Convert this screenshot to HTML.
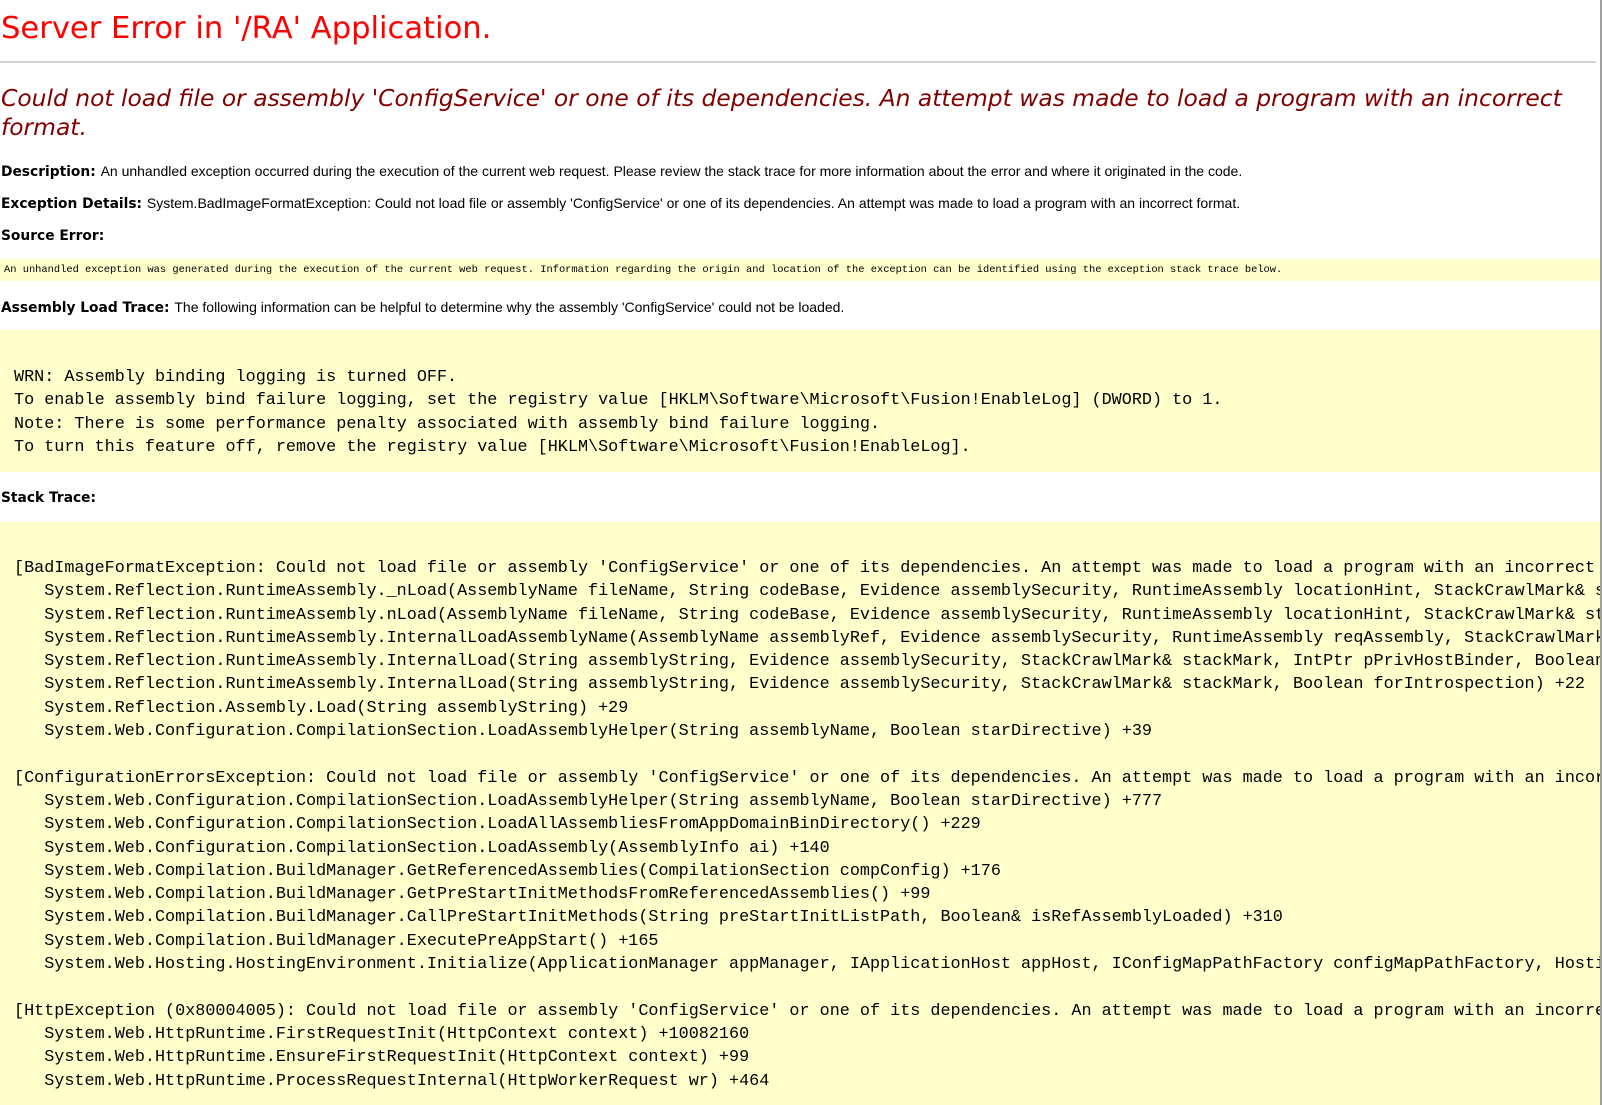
<!DOCTYPE html>
<html><head><meta charset="utf-8"><style>
html,body{margin:0;padding:0;width:1602px;height:1105px;overflow:hidden;background:#fff;position:relative}
#w{position:absolute;left:0;top:0;width:1600px;height:1105px;overflow:hidden}
.a{position:absolute;white-space:pre;line-height:1}
.t{left:1px;font-family:"DejaVu Sans","Liberation Sans",sans-serif;font-size:30.6px;color:#ff0000}
.h{left:1px;font-family:"DejaVu Sans","Liberation Sans",sans-serif;font-style:italic;font-size:23.4px;color:#800000}
.l{font-family:"DejaVu Sans","Liberation Sans",sans-serif;font-weight:bold;font-size:13.8px;color:#000;left:1px}
.l span{font-family:"Liberation Sans",Arial,sans-serif;font-weight:normal;font-size:14px}
.y{position:absolute;background:#ffffcc;left:0;width:1600px}
.m{font-family:"Liberation Mono","DejaVu Sans Mono",monospace;font-size:16.8px;color:#000}
.s{font-family:"Liberation Mono","DejaVu Sans Mono",monospace;font-size:10.4px;color:#000;left:4px}
</style></head><body><div id="w">
<div class="a t" style="top:14px">Server Error in '/RA' Application.</div>
<div style="position:absolute;left:0;top:61px;width:1596px;height:2px;background:#d4d4d4"></div>
<div class="a h" style="top:87px">Could not load file or assembly 'ConfigService' or one of its dependencies. An attempt was made to load a program with an incorrect</div>
<div class="a h" style="top:116px">format.</div>
<div class="a l" style="top:164px">Description: <span>An unhandled exception occurred during the execution of the current web request. Please review the stack trace for more information about the error and where it originated in the code.</span></div>
<div class="a l" style="top:196px">Exception Details: <span>System.BadImageFormatException: Could not load file or assembly 'ConfigService' or one of its dependencies. An attempt was made to load a program with an incorrect format.</span></div>
<div class="a l" style="top:230px">Source Error:</div>
<div class="y" style="top:259px;height:22px"></div>
<div class="a s" style="top:265px">An unhandled exception was generated during the execution of the current web request. Information regarding the origin and location of the exception can be identified using the exception stack trace below.</div>
<div class="a l" style="top:300px">Assembly Load Trace: <span>The following information can be helpful to determine why the assembly 'ConfigService' could not be loaded.</span></div>
<div class="y" style="top:330px;height:142px"></div>
<div class="y" style="top:522px;height:583px"></div>
<div class="a l" style="top:492px">Stack Trace:</div>
<div class="a m" style="left:14px;top:366px;line-height:23.4px">WRN: Assembly binding logging is turned OFF.
To enable assembly bind failure logging, set the registry value [HKLM\Software\Microsoft\Fusion!EnableLog] (DWORD) to 1.
Note: There is some performance penalty associated with assembly bind failure logging.
To turn this feature off, remove the registry value [HKLM\Software\Microsoft\Fusion!EnableLog].</div>
<div class="a m" style="left:14px;top:557px;line-height:23.3px">[BadImageFormatException: Could not load file or assembly 'ConfigService' or one of its dependencies. An attempt was made to load a program with an incorrect format.]
   System.Reflection.RuntimeAssembly._nLoad(AssemblyName fileName, String codeBase, Evidence assemblySecurity, RuntimeAssembly locationHint, StackCrawlMark&amp; stackMark)
   System.Reflection.RuntimeAssembly.nLoad(AssemblyName fileName, String codeBase, Evidence assemblySecurity, RuntimeAssembly locationHint, StackCrawlMark&amp; stackMark)
   System.Reflection.RuntimeAssembly.InternalLoadAssemblyName(AssemblyName assemblyRef, Evidence assemblySecurity, RuntimeAssembly reqAssembly, StackCrawlMark&amp; stackMark)
   System.Reflection.RuntimeAssembly.InternalLoad(String assemblyString, Evidence assemblySecurity, StackCrawlMark&amp; stackMark, IntPtr pPrivHostBinder, Boolean forIntrospection)
   System.Reflection.RuntimeAssembly.InternalLoad(String assemblyString, Evidence assemblySecurity, StackCrawlMark&amp; stackMark, Boolean forIntrospection) +22
   System.Reflection.Assembly.Load(String assemblyString) +29
   System.Web.Configuration.CompilationSection.LoadAssemblyHelper(String assemblyName, Boolean starDirective) +39

[ConfigurationErrorsException: Could not load file or assembly 'ConfigService' or one of its dependencies. An attempt was made to load a program with an incorrect format.]
   System.Web.Configuration.CompilationSection.LoadAssemblyHelper(String assemblyName, Boolean starDirective) +777
   System.Web.Configuration.CompilationSection.LoadAllAssembliesFromAppDomainBinDirectory() +229
   System.Web.Configuration.CompilationSection.LoadAssembly(AssemblyInfo ai) +140
   System.Web.Compilation.BuildManager.GetReferencedAssemblies(CompilationSection compConfig) +176
   System.Web.Compilation.BuildManager.GetPreStartInitMethodsFromReferencedAssemblies() +99
   System.Web.Compilation.BuildManager.CallPreStartInitMethods(String preStartInitListPath, Boolean&amp; isRefAssemblyLoaded) +310
   System.Web.Compilation.BuildManager.ExecutePreAppStart() +165
   System.Web.Hosting.HostingEnvironment.Initialize(ApplicationManager appManager, IApplicationHost appHost, IConfigMapPathFactory configMapPathFactory, HostingEnvironmentParameters hostingParameters)

[HttpException (0x80004005): Could not load file or assembly 'ConfigService' or one of its dependencies. An attempt was made to load a program with an incorrect format.]
   System.Web.HttpRuntime.FirstRequestInit(HttpContext context) +10082160
   System.Web.HttpRuntime.EnsureFirstRequestInit(HttpContext context) +99
   System.Web.HttpRuntime.ProcessRequestInternal(HttpWorkerRequest wr) +464</div>
</div>
<div style="position:absolute;left:1600px;top:0;width:2px;height:1105px;background:#a0a0a0"></div>
</body></html>
